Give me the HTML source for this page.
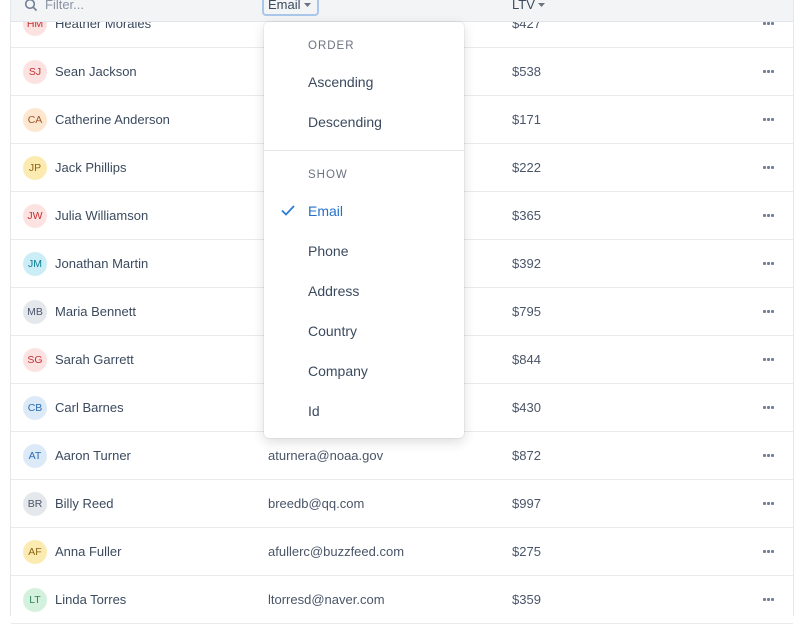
<!DOCTYPE html>
<html><head><meta charset="utf-8"><style>
*{margin:0;padding:0;box-sizing:border-box}
body{width:796px;height:616px;overflow:hidden;background:#fff;font-family:"Liberation Sans",sans-serif;color:#3b4a5e;position:relative}
.frame{position:absolute;left:10px;top:0;width:784px;height:616px;border-left:1px solid #e5e7eb;border-right:1px solid #e5e7eb}
.hdr{position:absolute;left:11px;top:0;width:782px;height:22px;background:#f3f4f6;border-bottom:1px solid #e2e5ea;z-index:2}
.row{position:absolute;left:11px;width:782px;height:48px;border-bottom:1px solid #e8eaed}
.av{position:absolute;left:12px;top:12px;width:24px;height:24px;border-radius:50%;font-size:10.5px;line-height:24px;text-align:center}
.nm{position:absolute;left:44px;top:0;line-height:48px;font-size:13px;color:#3b4a5e}
.em{position:absolute;left:257px;line-height:48px;font-size:13px;color:#4a5568}
.lt{position:absolute;left:501px;line-height:48px;font-size:13px;color:#4a5568}
.dt{position:absolute;left:752px;top:22px;width:12px;height:4px}
.dt i{position:absolute;top:0;width:3px;height:3px;background:#718096;border-radius:1px}
.r{background:#fde2e2;color:#c53030}.o{background:#fde8cf;color:#a0522d}.y{background:#fcebb0;color:#8a6416}.c{background:#cbeef6;color:#0b7c93}.g{background:#e4e7ec;color:#4a5568}.b{background:#dce9f6;color:#2b6cb0}.gr{background:#d3f1dd;color:#2f855a}
.menu{position:absolute;left:264px;top:22px;width:200px;height:416px;background:#fff;border-radius:5px;box-shadow:0 4px 12px rgba(0,0,0,.14),0 0 0 1px rgba(0,0,0,.04);z-index:3}
.menu div{position:absolute;left:44px;font-size:14px;color:#3b4a5e}
.menu .lb{font-size:11.5px;letter-spacing:1px;color:#6b7280}
</style></head><body>
<div class="frame"></div>
<div class="hdr">
<svg style="position:absolute;left:13px;top:-2px" width="14" height="14" viewBox="0 0 14 14"><circle cx="6" cy="6" r="4.3" fill="none" stroke="#718096" stroke-width="1.6"/><path d="M9.2 9.2L12.5 12.5" stroke="#718096" stroke-width="1.7"/></svg>
<span style="position:absolute;left:34px;top:-3px;font-size:13px;color:#8a94a3">Filter...</span>
<div style="position:absolute;left:251px;top:-6px;width:57px;height:22px;border:2px solid #a9c7ea;border-radius:4px;background:#f3f4f6"></div>
<span style="position:absolute;left:257px;top:-3px;font-size:13px;color:#3b4a5e">Email</span>
<svg style="position:absolute;left:293px;top:3px" width="8" height="5"><path d="M0 0H7L3.5 4Z" fill="#6b7280"/></svg>
<span style="position:absolute;left:501px;top:-3px;font-size:13px;color:#3b4a5e">LTV</span>
<svg style="position:absolute;left:527px;top:3px" width="8" height="5"><path d="M0 0H7L3.5 4Z" fill="#6b7280"/></svg>
</div>
<div class="row" style="top:0px"><div class="av r">HM</div><div class="nm">Heather Morales</div><div class="lt">$427</div><div class="dt"><i style="left:0"></i><i style="left:4px"></i><i style="left:8px"></i></div></div>
<div class="row" style="top:48px"><div class="av r">SJ</div><div class="nm">Sean Jackson</div><div class="lt">$538</div><div class="dt"><i style="left:0"></i><i style="left:4px"></i><i style="left:8px"></i></div></div>
<div class="row" style="top:96px"><div class="av o">CA</div><div class="nm">Catherine Anderson</div><div class="lt">$171</div><div class="dt"><i style="left:0"></i><i style="left:4px"></i><i style="left:8px"></i></div></div>
<div class="row" style="top:144px"><div class="av y">JP</div><div class="nm">Jack Phillips</div><div class="lt">$222</div><div class="dt"><i style="left:0"></i><i style="left:4px"></i><i style="left:8px"></i></div></div>
<div class="row" style="top:192px"><div class="av r">JW</div><div class="nm">Julia Williamson</div><div class="lt">$365</div><div class="dt"><i style="left:0"></i><i style="left:4px"></i><i style="left:8px"></i></div></div>
<div class="row" style="top:240px"><div class="av c">JM</div><div class="nm">Jonathan Martin</div><div class="lt">$392</div><div class="dt"><i style="left:0"></i><i style="left:4px"></i><i style="left:8px"></i></div></div>
<div class="row" style="top:288px"><div class="av g">MB</div><div class="nm">Maria Bennett</div><div class="lt">$795</div><div class="dt"><i style="left:0"></i><i style="left:4px"></i><i style="left:8px"></i></div></div>
<div class="row" style="top:336px"><div class="av r">SG</div><div class="nm">Sarah Garrett</div><div class="lt">$844</div><div class="dt"><i style="left:0"></i><i style="left:4px"></i><i style="left:8px"></i></div></div>
<div class="row" style="top:384px"><div class="av b">CB</div><div class="nm">Carl Barnes</div><div class="lt">$430</div><div class="dt"><i style="left:0"></i><i style="left:4px"></i><i style="left:8px"></i></div></div>
<div class="row" style="top:432px"><div class="av b">AT</div><div class="nm">Aaron Turner</div><div class="em">aturnera@noaa.gov</div><div class="lt">$872</div><div class="dt"><i style="left:0"></i><i style="left:4px"></i><i style="left:8px"></i></div></div>
<div class="row" style="top:480px"><div class="av g">BR</div><div class="nm">Billy Reed</div><div class="em">breedb@qq.com</div><div class="lt">$997</div><div class="dt"><i style="left:0"></i><i style="left:4px"></i><i style="left:8px"></i></div></div>
<div class="row" style="top:528px"><div class="av y">AF</div><div class="nm">Anna Fuller</div><div class="em">afullerc@buzzfeed.com</div><div class="lt">$275</div><div class="dt"><i style="left:0"></i><i style="left:4px"></i><i style="left:8px"></i></div></div>
<div class="row" style="top:576px"><div class="av gr">LT</div><div class="nm">Linda Torres</div><div class="em">ltorresd@naver.com</div><div class="lt">$359</div><div class="dt"><i style="left:0"></i><i style="left:4px"></i><i style="left:8px"></i></div></div>
<div class="menu">
<div class="lb" style="top:18px">ORDER</div>
<div style="top:52px">Ascending</div>
<div style="top:92px">Descending</div>
<span style="position:absolute;left:0;top:128px;width:200px;height:1px;background:#e5e7eb"></span>
<div class="lb" style="top:147px">SHOW</div>
<svg style="position:absolute;left:17px;top:183px" width="14" height="11" viewBox="0 0 14 11"><path d="M1 5.5L5 9.5L13 1" fill="none" stroke="#2b7bd6" stroke-width="1.8"/></svg>
<div style="top:181px;color:#2570c8">Email</div>
<div style="top:221px">Phone</div>
<div style="top:261px">Address</div>
<div style="top:301px">Country</div>
<div style="top:341px">Company</div>
<div style="top:381px">Id</div>
</div>
</body></html>
